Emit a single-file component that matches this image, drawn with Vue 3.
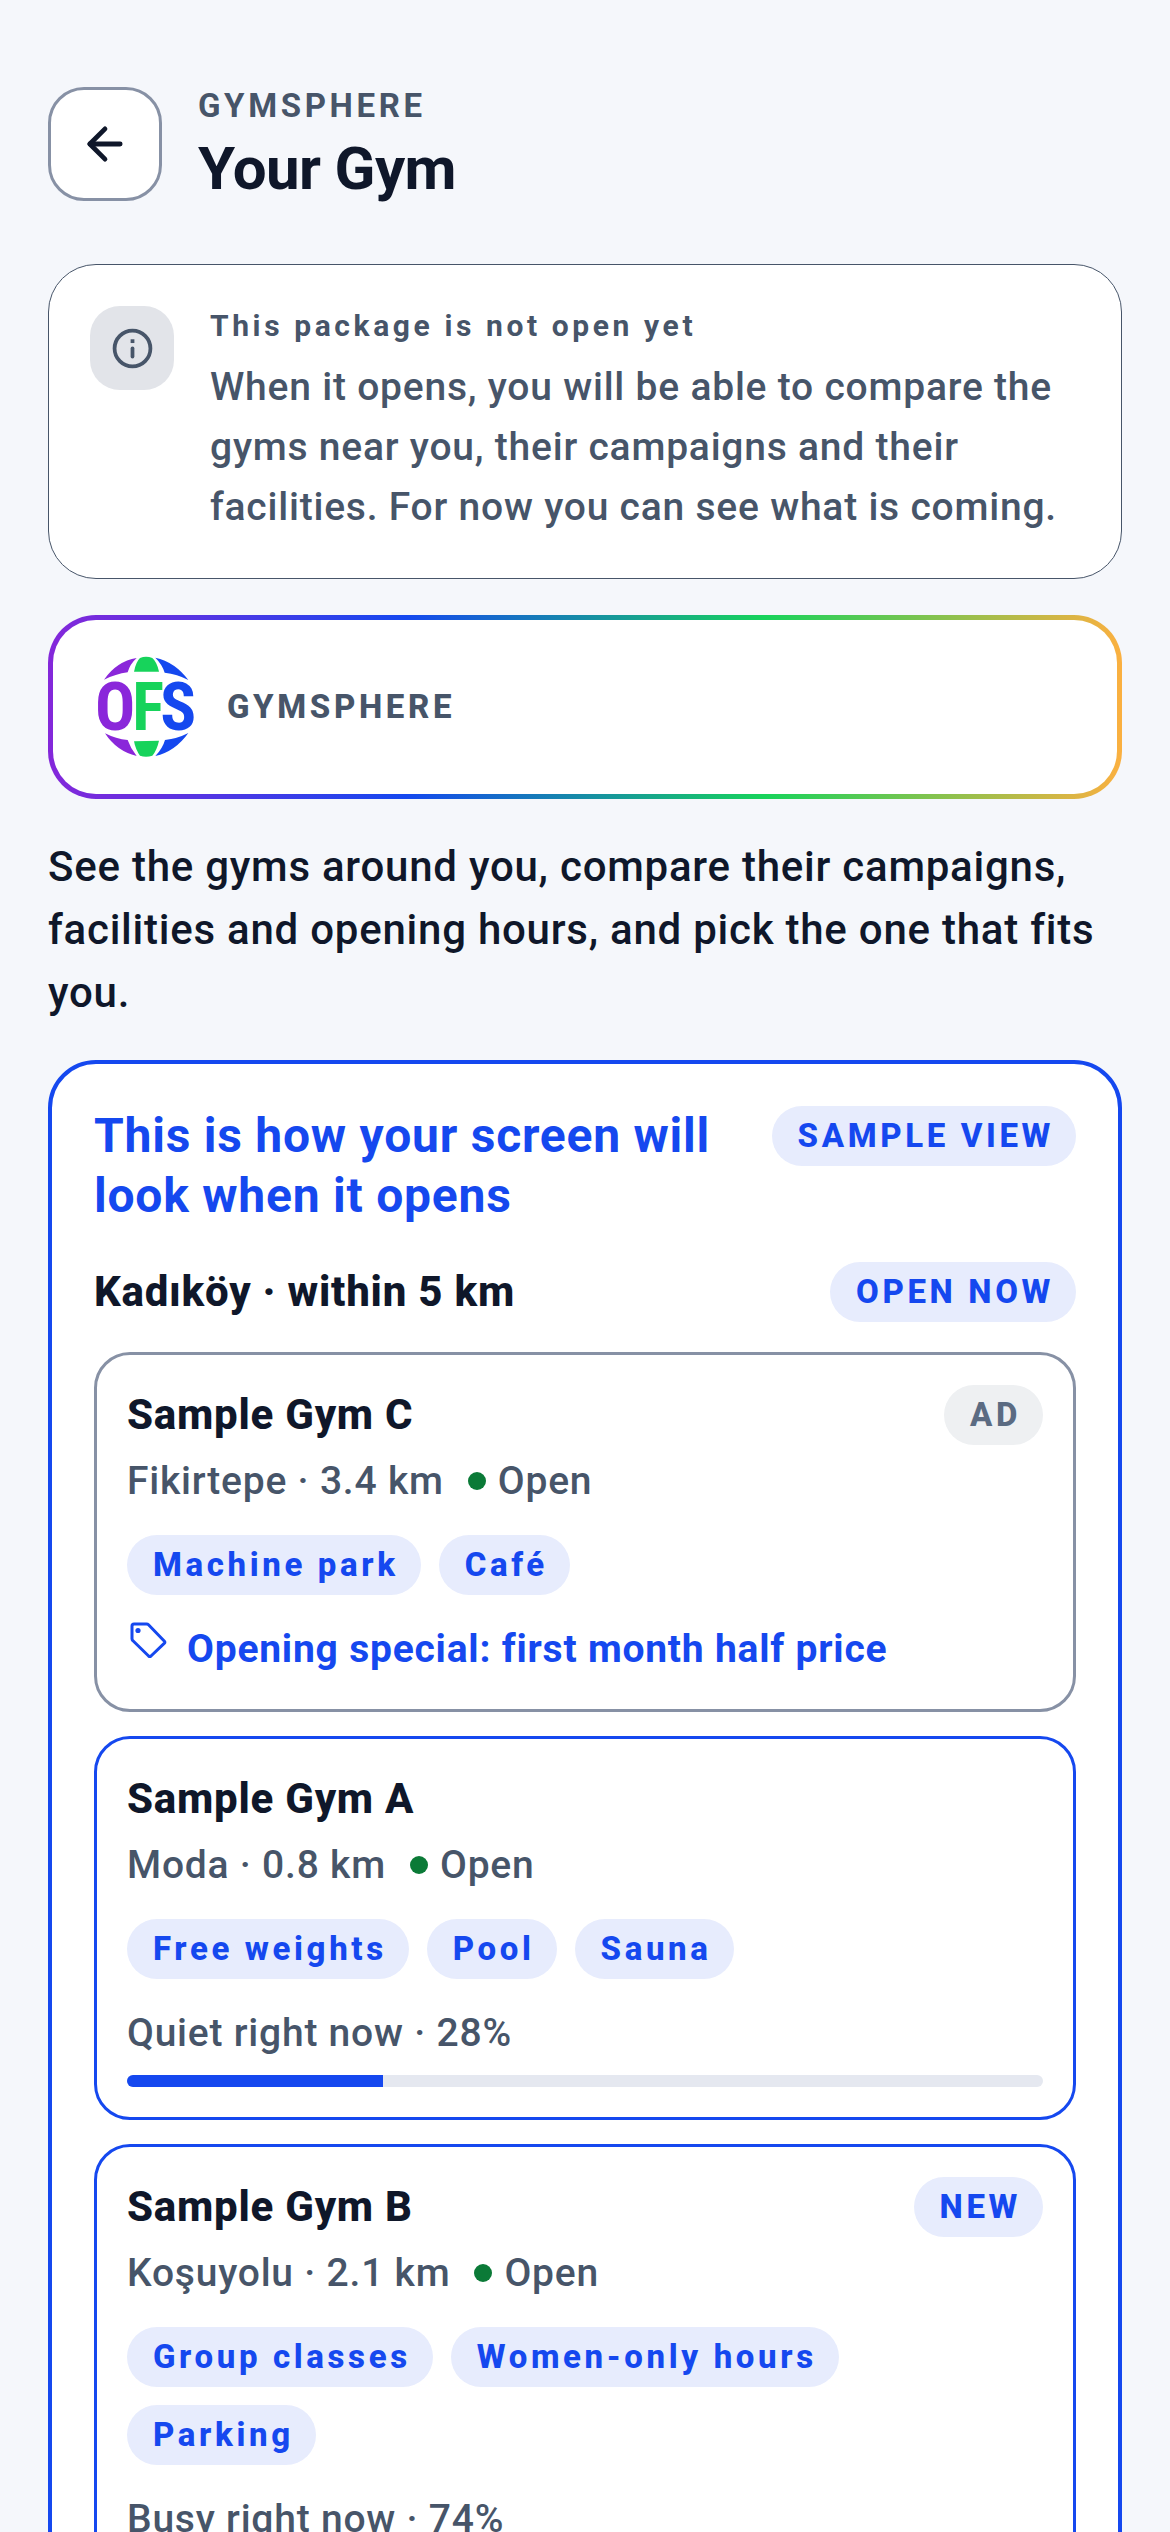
<template>
  <main class="page">
    <header class="header">
      <button class="back-button" type="button" aria-label="Back">
        <svg class="back-icon" viewBox="0 0 24 24" aria-hidden="true">
          <path d="M12 19l-7-7 7-7" />
          <path d="M19 12H5" />
        </svg>
      </button>
      <div class="header__titles">
        <div class="header__eyebrow">GYMSPHERE</div>
        <h1 class="header__title">Your Gym</h1>
      </div>
    </header>

    <div class="content">
      <!-- notice -->
      <section class="notice">
        <div class="notice__icon">
          <svg class="info-icon" viewBox="0 0 24 24" aria-hidden="true">
            <circle cx="12" cy="12" r="10" />
            <path d="M12 16.5v-4.5" />
            <path class="info-icon__dot" d="M12 7.9h.01" />
          </svg>
        </div>
        <div class="notice__body">
          <h2 class="notice__title">This package is not open yet</h2>
          <p class="notice__text">
            When it opens, you will be able to compare the gyms near you, their campaigns and their
            facilities. For now you can see what is coming.
          </p>
        </div>
      </section>

      <!-- brand -->
      <section class="brand">
        <svg class="brand__logo" viewBox="15 48 306 306" aria-hidden="true">
          <g class="logo-purple">
            <path d="M140 54Q120 72 113 97Q77 102 42 119Q80 64 140 54Z" />
            <path d="M45 280Q78 297 113 300Q121 324 140 348Q80 334 45 280Z" />
            <text x="75" y="271">O</text>
          </g>
          <g class="logo-green">
            <path d="M132 95Q138 65 150 54Q168 47 187 54Q201 66 207 95Z" />
            <path d="M132 304L207 302Q201 330 187 347Q168 353 150 347Q137 330 132 304Z" />
            <text x="174" y="271">F</text>
          </g>
          <g class="logo-blue">
            <path d="M196 53Q255 66 295 120Q262 102 224 98Q217 74 196 53Z" />
            <path d="M295 279Q255 335 196 348Q218 325 225 300Q262 296 295 279Z" />
            <text x="265" y="271">S</text>
          </g>
        </svg>
        <span class="brand__name">GYMSPHERE</span>
      </section>

      <p class="intro">
        See the gyms around you, compare their campaigns, facilities and opening hours, and pick the
        one that fits you.
      </p>

      <!-- sample screen -->
      <section class="preview">
        <div class="preview__head">
          <h2 class="preview__title">This is how your screen will look when it opens</h2>
          <span class="pill">SAMPLE VIEW</span>
        </div>
        <div class="preview__filter">
          <h3 class="preview__place">Kadıköy · within 5 km</h3>
          <span class="pill">OPEN NOW</span>
        </div>

        <div class="gym-list">
          <article v-for="gym in gyms" :key="gym.name" :class="['gym', { 'gym--ad': gym.ad }]">
            <div class="gym__head">
              <h4 class="gym__name">{{ gym.name }}</h4>
              <span v-if="gym.badge" :class="['pill', { 'pill--muted': gym.ad }]">{{ gym.badge }}</span>
            </div>
            <div class="gym__meta">
              <span>{{ gym.area }} · {{ gym.distance }}</span>
              <span class="gym__status"><i class="gym__dot"></i>Open</span>
            </div>
            <ul class="gym__tags">
              <li v-for="tag in gym.tags" :key="tag" class="pill">{{ tag }}</li>
            </ul>
            <div v-if="gym.offer" class="gym__offer">
              <svg class="tag-icon" viewBox="0 0 42 42" aria-hidden="true">
                <path d="M7 5h12.500q1.200 0 2 .8l15.700 16.200q1.200 1.200 0 2.400L24 37q-1.200 1-2.400 0L6 21.800q-1-.9-1-2V7q0-2 2-2z" />
                <circle cx="11" cy="11.500" r="2.600" />
              </svg>
              <span>{{ gym.offer }}</span>
            </div>
            <div v-if="gym.load" class="gym__load">
              <div class="gym__load-label">{{ gym.mood }} right now · {{ gym.load }}%</div>
              <div class="load-bar">
                <div class="load-bar__fill" :style="{ width: gym.load + '%' }"></div>
              </div>
            </div>
          </article>
        </div>
      </section>
    </div>
  </main>
</template>

<script setup>
import { ref } from 'vue';

const gyms = ref([
  {
    name: 'Sample Gym C',
    area: 'Fikirtepe',
    distance: '3.4 km',
    badge: 'AD',
    ad: true,
    tags: ['Machine park', 'Café'],
    offer: 'Opening special: first month half price',
  },
  {
    name: 'Sample Gym A',
    area: 'Moda',
    distance: '0.8 km',
    tags: ['Free weights', 'Pool', 'Sauna'],
    mood: 'Quiet',
    load: 28,
  },
  {
    name: 'Sample Gym B',
    area: 'Koşuyolu',
    distance: '2.1 km',
    badge: 'NEW',
    tags: ['Group classes', 'Women-only hours', 'Parking'],
    mood: 'Busy',
    load: 74,
  },
]);
</script>

<style>
body {
  background: #f5f7fb;
}
</style>

<style scoped>
.page {
  padding: 82px 48px 48px;
  background: #f5f7fb;
  color: #0f172a;
  font-family: Roboto, "Noto Sans", sans-serif;
}
h1, h2, h3, h4, p, ul {
  margin: 0;
  padding: 0;
}
.header {
  display: flex;
  align-items: center;
  gap: 36px;
  margin-bottom: 59px;
}
.back-button {
  display: flex;
  align-items: center;
  justify-content: center;
  width: 114px;
  height: 114px;
  padding: 0;
  background: #fff;
  border: 3px solid #8791a5;
  border-radius: 36px;
  color: #0f172a;
  cursor: pointer;
}
.back-icon {
  width: 52px;
  height: 52px;
  fill: none;
  stroke: currentColor;
  stroke-width: 2.2;
  stroke-linecap: round;
  stroke-linejoin: round;
}
.header__titles {
  display: flex;
  flex-direction: column;
  gap: 3px;
}
.header__eyebrow {
  font-size: 33px;
  line-height: 48px;
  font-weight: 700;
  letter-spacing: 0.11em;
  color: #475569;
}
.header__title {
  font-size: 60px;
  line-height: 72px;
  font-weight: 700;
  letter-spacing: -0.01em;
}
.content {
  display: flex;
  flex-direction: column;
  gap: 36px;
}
.notice {
  display: flex;
  align-items: flex-start;
  gap: 36px;
  padding: 41px;
  background: #fff;
  border: 1px solid #475569;
  border-radius: 48px;
  color: #475569;
}
.notice__icon {
  display: flex;
  align-items: center;
  justify-content: center;
  flex: none;
  width: 84px;
  height: 84px;
  background: #e2e4e9;
  border-radius: 30px;
}
.info-icon {
  width: 43px;
  height: 43px;
  fill: none;
  stroke: currentColor;
  stroke-width: 2.1;
  stroke-linecap: round;
}
.info-icon__dot {
  stroke-linecap: square;
}
.notice__body {
  display: flex;
  flex-direction: column;
  gap: 12px;
}
.notice__title {
  font-size: 30px;
  line-height: 39px;
  font-weight: 700;
  letter-spacing: 0.12em;
}
.notice__text {
  font-size: 39px;
  line-height: 60px;
  font-weight: 500;
  letter-spacing: 0.02em;
}
.brand {
  display: flex;
  align-items: center;
  gap: 30px;
  padding: 36px 42px;
  border: 5px solid transparent;
  border-radius: 48px;
  background:
    linear-gradient(#fff, #fff) padding-box,
    linear-gradient(90deg, #8427da, #1548ef, #17d35b, #fbb040) border-box;
}
.brand__logo {
  width: 102px;
  height: 102px;
  overflow: visible;
  font-family: "Roboto Condensed", "Liberation Sans Narrow", "DejaVu Sans Condensed", sans-serif;
  font-size: 200px;
  font-weight: 700;
  text-anchor: middle;
}
.logo-purple {
  fill: #8a27da;
}
.logo-green {
  fill: #17d35b;
}
.logo-blue {
  fill: #1548ef;
}
.brand__name {
  font-size: 33px;
  line-height: 48px;
  font-weight: 800;
  letter-spacing: 0.11em;
  color: #475569;
}
.intro {
  font-size: 42px;
  line-height: 63px;
  font-weight: 500;
  letter-spacing: 0.018em;
}
.preview {
  padding: 42px;
  background: #fff;
  border: 4px solid #1548ef;
  border-radius: 48px;
}
.preview__head {
  display: flex;
  align-items: flex-start;
  justify-content: space-between;
  gap: 36px;
  margin-bottom: 36px;
}
.preview__title {
  font-size: 48px;
  line-height: 60px;
  font-weight: 700;
  letter-spacing: 0.016em;
  color: #1548ef;
}
.preview__filter {
  display: flex;
  align-items: center;
  justify-content: space-between;
  margin-bottom: 30px;
}
.preview__place,
.gym__name {
  font-size: 42px;
  line-height: 60px;
  font-weight: 800;
  letter-spacing: 0.018em;
}
.pill {
  flex: none;
  padding: 0 22px 0 26px;
  background: #e7ecfd;
  border-radius: 30px;
  color: #1548ef;
  font-size: 33px;
  line-height: 60px;
  font-weight: 800;
  letter-spacing: 0.11em;
  white-space: nowrap;
}
.pill--muted {
  background: #eef0f2;
  color: #5b6b82;
}
.gym-list {
  display: flex;
  flex-direction: column;
  gap: 24px;
}
.gym {
  padding: 30px;
  border: 3px solid #1548ef;
  border-radius: 36px;
}
.gym--ad {
  border-color: #8791a5;
}
.gym__head {
  display: flex;
  align-items: center;
  justify-content: space-between;
}
.gym__meta {
  display: flex;
  align-items: center;
  gap: 24px;
  margin-top: 6px;
  color: #475569;
  font-size: 39px;
  line-height: 60px;
  font-weight: 500;
  letter-spacing: 0.02em;
}
.gym__status {
  display: flex;
  align-items: center;
  gap: 12px;
}
.gym__dot {
  width: 18px;
  height: 18px;
  background: #0b7a37;
  border-radius: 50%;
}
.gym__tags {
  display: flex;
  flex-wrap: wrap;
  gap: 18px;
  margin-top: 24px;
  list-style: none;
}
.gym__offer {
  display: flex;
  align-items: flex-start;
  gap: 18px;
  margin-top: 24px;
  color: #1548ef;
  font-size: 39px;
  line-height: 60px;
  font-weight: 700;
  letter-spacing: 0.02em;
}
.tag-icon {
  width: 42px;
  height: 42px;
  fill: none;
  stroke: currentColor;
  stroke-width: 3;
  stroke-linejoin: round;
}
.tag-icon circle {
  fill: currentColor;
  stroke: none;
}
.gym__load {
  margin-top: 24px;
}
.gym__load-label {
  color: #475569;
  font-size: 39px;
  line-height: 60px;
  font-weight: 500;
  letter-spacing: 0.02em;
}
.load-bar {
  height: 12px;
  margin-top: 12px;
  background: #e5e8f0;
  border-radius: 6px;
  overflow: hidden;
}
.load-bar__fill {
  height: 100%;
  background: #1548ef;
}
</style>
